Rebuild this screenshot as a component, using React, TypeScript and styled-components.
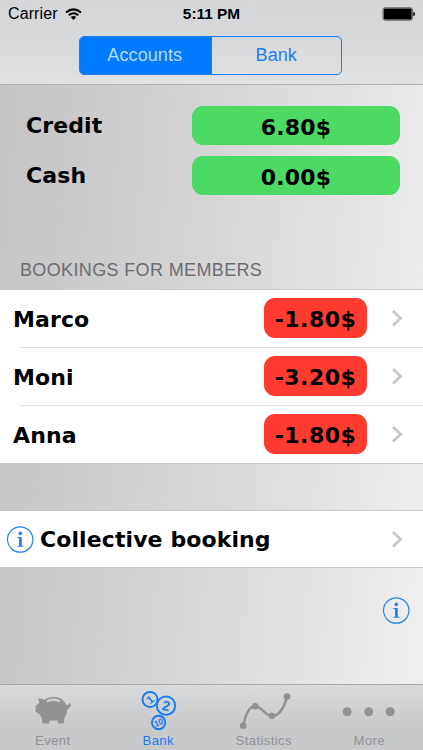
import React from 'react';
import styled, { createGlobalStyle } from 'styled-components';

const GlobalStyle = createGlobalStyle`
  * { box-sizing: border-box; }
  body { margin: 0; overflow: hidden; }
  svg { display: block; flex: none; }
`;

const Screen = styled.div`
  width: 423px;
  height: 750px;
  display: flex;
  flex-direction: column;
  overflow: hidden;
  font-family: "Liberation Sans", Arial, sans-serif;
  background: linear-gradient(95deg, #c3c3c3 0%, #d6d6d6 48%, #f0f0f0 100%);
`;

const Header = styled.header`
  height: 85px;
  flex: none;
  background: linear-gradient(#d5d6d8 0%, #d6d7d9 40%, #e1e2e2 100%);
  border-bottom: 1px solid #b2b2b3;
`;

const StatusBar = styled.div`
  height: 28px;
  display: grid;
  grid-template-columns: 1fr auto 1fr;
  align-items: center;
  padding: 0 8px;
  color: #000;
`;

const Carrier = styled.div`
  display: flex;
  align-items: center;
  gap: 7px;
  font-size: 16px;
  letter-spacing: 0.1px;
`;

const Clock = styled.div`
  font-size: 15.4px;
  font-weight: 700;
`;

const Battery = styled.div`
  justify-self: end;
`;

const Segments = styled.div`
  display: flex;
  width: 263px;
  height: 39px;
  margin: 8px 0 0 79px;
  border: 1px solid #1a7df0;
  border-radius: 5px;
  overflow: hidden;
`;

const Segment = styled.button<{ $active?: boolean }>`
  flex: 1;
  border: 0;
  padding: 0 1px 1px 0;
  font: 18px "Liberation Sans", Arial, sans-serif;
  letter-spacing: 0.1px;
  background: ${p => (p.$active ? '#007aff' : 'transparent')};
  color: ${p => (p.$active ? '#b9dafb' : '#1c80f4')};
  & + & { border-left: 1px solid #1a7df0; padding-right: 0; }
`;

const Content = styled.main`
  flex: 1;
  display: flex;
  flex-direction: column;
`;

const Totals = styled.section`
  display: grid;
  gap: 11px;
  padding: 21px 23px 0 26px;
  height: 173px;
  align-content: start;
`;

const TotalRow = styled.div`
  display: flex;
  justify-content: space-between;
  align-items: center;
  height: 39px;
`;

const Label = styled.span<{ $shift?: number }>`
  flex: 1;
  padding-top: ${p => p.$shift ?? 0}px;
  font: 700 22px/26px "DejaVu Sans", Verdana, sans-serif;
  letter-spacing: 0.1px;
  color: #000;
`;

const Amount = styled.span<{ $tone: 'credit' | 'debt' }>`
  width: ${p => (p.$tone === 'credit' ? '208px' : '103px')};
  height: ${p => (p.$tone === 'credit' ? '39px' : '40px')};
  border-radius: 11px;
  background: ${p => (p.$tone === 'credit' ? '#4cd964' : '#ff3b30')};
  padding-top: 2px;
  text-align: center;
  font: 700 22px/39px "DejaVu Sans", Verdana, sans-serif;
  letter-spacing: ${p => (p.$tone === 'credit' ? '0.2px' : '0.5px')};
  color: #000;
`;

const SectionTitle = styled.h2`
  margin: 0;
  height: 31px;
  padding-left: 20px;
  font-size: 18px;
  line-height: 24px;
  font-weight: 400;
  letter-spacing: 0.36px;
  color: #6d6d72;
`;

const List = styled.div`
  background: #fff;
  border-top: 1px solid #c9c9cb;
  border-bottom: 1px solid #c9c9cb;
`;

const Row = styled.div`
  height: 58px;
  display: flex;
  align-items: center;
  padding: 0 20px 2px 13px;
  background: linear-gradient(#e2e2e4, #e2e2e4) 20px 100% / 100% 1px no-repeat;
  &:last-child { height: 57px; background: none; }
`;

const ActionList = styled(List)`
  margin-top: 46px;
  height: 58px;
`;

const ActionRow = styled(Row)`
  && { height: 56px; }
  padding-left: 7px;
  padding-bottom: 0;
  gap: 6px;
`;

const ChevronSlot = styled.span`
  padding-left: 24px;
`;

const Footnote = styled.div`
  display: flex;
  justify-content: flex-end;
  padding: 29px 13px 0 0;
`;

const TabBar = styled.nav`
  height: 66px;
  flex: none;
  display: grid;
  grid-template-columns: repeat(4, 105.5px);
  border-top: 1px solid #aaabac;
  background: linear-gradient(#d9dadc 0%, #c9cacc 60%, #c7c8ca 100%);
`;

const Tab = styled.div<{ $active?: boolean }>`
  display: flex;
  flex-direction: column;
  align-items: center;
  color: ${p => (p.$active ? '#167cf5' : '#929292')};
  font-size: 13.2px;
  line-height: 16px;
  letter-spacing: 0.35px;
`;

const WifiIcon = () => (
  <svg width="17" height="13" viewBox="0 0 17 13" fill="none" stroke="#000" strokeWidth="2">
    <path d="M1 4.5Q8.5-1.8 16 4.5M3.7 7.2Q8.5 3.3 13.3 7.2" />
    <path d="M5.7 9Q8.5 6.9 11.3 9L8.5 12Z" fill="#000" stroke="none" />
  </svg>
);

const BatteryIcon = () => (
  <svg width="33" height="14" viewBox="0 0 33 14">
    <rect x="1" y=".8" width="29.4" height="12.4" rx="2" fill="#888" stroke="#666" />
    <rect x="2" y="1.8" width="27.4" height="10.4" rx="1" />
    <path d="M31.3 4.7Q33 5 33 7T31.3 9.3Z" />
  </svg>
);

const Chevron = () => (
  <svg width="12" height="18" viewBox="0 0 12 18" fill="none" stroke="#c7c7cc" strokeWidth="2.8">
    <path d="M2 2L9.6 9.2L2 16.4" />
  </svg>
);

const InfoIcon = () => (
  <svg width="27" height="27" viewBox="0 0 27 27" fill="none" stroke="#2483f0">
    <circle cx="13.2" cy="13.5" r="12.7" strokeWidth="1.2" />
    <circle cx="13.3" cy="7.4" r="1.8" fill="#2483f0" stroke="none" />
    <path d="M10.3 11H14.8V19.4L16.5 20V20.7H10.3V20L12 19.4V12.2L10.3 11.8Z" fill="#2483f0" stroke="none" />
  </svg>
);

const PigIcon = () => (
  <svg width="106" height="48" viewBox="0 0 106 48" fill="#929292">
    <path d="M38.2 13.2Q41 13.4 44.6 14.8Q48 12 54 12Q62.5 12 65.9 19.2Q69.2 21.4 69.4 18L71 18.8Q70.8 22.4 67.3 24.8Q67.3 29.4 64.6 32.2L64 37.5Q63.8 38.5 62.8 38.5H58.4L57.3 35.6H49.6L48.8 38.5H43.4Q42.5 38.5 42.3 37.4L41.6 32.5Q40 31 39 28.6L36.6 27.6Q35.6 27.3 35.6 26.3V21.5Q35.6 20.4 36.8 20.1L39.4 17.8Z" />
    <path d="M46.8 16.4Q53.5 12.8 60 16.5" fill="none" stroke="#d0d1d3" strokeWidth="2" />
  </svg>
);

const CoinText = styled.text`
  font-family: "Liberation Sans", Arial, sans-serif;
  font-weight: 700;
  letter-spacing: 0;
  fill: currentColor;
  text-anchor: middle;
`;

const CoinsIcon = () => (
  <svg width="106" height="48" viewBox="0 0 106 48" fill="none" stroke="currentColor" strokeWidth="1.9">
    <circle cx="45" cy="14.5" r="7.5" />
    <circle cx="61" cy="20.7" r="9.2" />
    <circle cx="53.6" cy="37.5" r="6.7" />
    <CoinText x="45" y="18.4" fontSize="11" stroke="none" transform="rotate(-38 45 14.5)">1</CoinText>
    <CoinText x="61" y="25.6" fontSize="14" stroke="none" transform="rotate(12 61 20.7)">2</CoinText>
    <CoinText x="53.6" y="40.5" fontSize="8.5" stroke="none" transform="rotate(-20 53.6 37.5)">10</CoinText>
  </svg>
);

const ChartIcon = () => (
  <svg width="106" height="48" viewBox="0 0 106 48" fill="#929292">
    <path d="M32.2 40.7Q36.3 21.3 44.2 21.3C51 21.3 54 31 61 31C68 31 73 23 76 11.7" fill="none" stroke="#929292" strokeWidth="2.6" />
    <circle cx="32.2" cy="40.7" r="3.3" />
    <circle cx="44.2" cy="21.2" r="3.3" />
    <circle cx="60.8" cy="30.8" r="3.2" />
    <circle cx="76" cy="11.6" r="3.3" />
  </svg>
);

const MoreIcon = () => (
  <svg width="106" height="48" viewBox="0 0 106 48" fill="#929292">
    <circle cx="31.2" cy="26.7" r="4.5" />
    <circle cx="52.7" cy="26.7" r="4.5" />
    <circle cx="74.2" cy="26.7" r="4.5" />
  </svg>
);

const members = [
  { name: 'Marco', balance: '-1.80$' },
  { name: 'Moni', balance: '-3.20$' },
  { name: 'Anna', balance: '-1.80$' },
];

const totals = [
  { name: 'Credit', value: '6.80$' },
  { name: 'Cash', value: '0.00$' },
];

const tabs = [
  { name: 'Event', Icon: PigIcon },
  { name: 'Bank', Icon: CoinsIcon },
  { name: 'Statistics', Icon: ChartIcon },
  { name: 'More', Icon: MoreIcon },
];

export default function App() {
  return (
    <Screen>
      <GlobalStyle />
      <Header>
        <StatusBar>
          <Carrier>Carrier <WifiIcon /></Carrier>
          <Clock>5:11 PM</Clock>
          <Battery><BatteryIcon /></Battery>
        </StatusBar>
        <Segments>
          <Segment $active>Accounts</Segment>
          <Segment>Bank</Segment>
        </Segments>
      </Header>
      <Content>
        <Totals>
          {totals.map(t => (
            <TotalRow key={t.name}>
              <Label>{t.name}</Label>
              <Amount $tone="credit">{t.value}</Amount>
            </TotalRow>
          ))}
        </Totals>
        <SectionTitle>BOOKINGS FOR MEMBERS</SectionTitle>
        <List>
          {members.map(m => (
            <Row key={m.name}>
              <Label $shift={4}>{m.name}</Label>
              <Amount $tone="debt">{m.balance}</Amount>
              <ChevronSlot><Chevron /></ChevronSlot>
            </Row>
          ))}
        </List>
        <ActionList>
          <ActionRow>
            <InfoIcon />
            <Label $shift={2}>Collective booking</Label>
            <ChevronSlot><Chevron /></ChevronSlot>
          </ActionRow>
        </ActionList>
        <Footnote><InfoIcon /></Footnote>
      </Content>
      <TabBar>
        {tabs.map(({ name, Icon }) => (
          <Tab key={name} $active={name === 'Bank'}>
            <Icon />
            {name}
          </Tab>
        ))}
      </TabBar>
    </Screen>
  );
}
